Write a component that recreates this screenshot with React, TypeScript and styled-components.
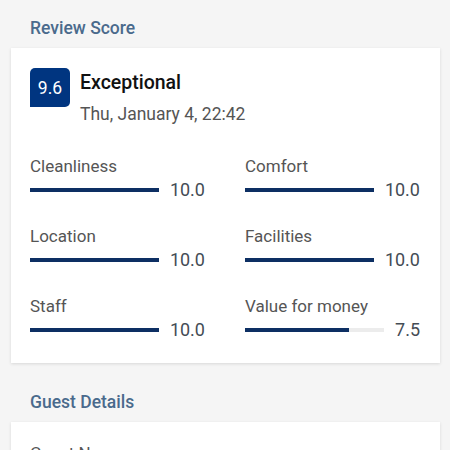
import styled, { createGlobalStyle } from "styled-components";

const GlobalStyle = createGlobalStyle`
  body {
    margin: 0;
    background: #f5f5f5;
    font-family: Roboto, "Noto Sans", sans-serif;
  }
`;

interface Rating {
  label: string;
  score: number;
}

const ratings: Rating[] = [
  { label: "Cleanliness", score: 10 },
  { label: "Comfort", score: 10 },
  { label: "Location", score: 10 },
  { label: "Facilities", score: 10 },
  { label: "Staff", score: 10 },
  { label: "Value for money", score: 7.5 },
];

export default function App() {
  return (
    <Page>
      <GlobalStyle />
      <SectionTitle>Review Score</SectionTitle>
      <Card>
        <ScoreHeader>
          <Badge>9.6</Badge>
          <div>
            <Verdict>Exceptional</Verdict>
            <DateText>Thu, January 4, 22:42</DateText>
          </div>
        </ScoreHeader>
        <RatingGrid>
          {ratings.map((r) => (
            <RatingItem key={r.label}>
              <RatingLabel>{r.label}</RatingLabel>
              <BarRow>
                <Track>
                  <Fill style={{ width: `${r.score * 10}%` }} />
                </Track>
                <Value>{r.score.toFixed(1)}</Value>
              </BarRow>
            </RatingItem>
          ))}
        </RatingGrid>
      </Card>
      <SectionTitle $spaced>Guest Details</SectionTitle>
      <Card>
        <RatingLabel>Guest Name</RatingLabel>
      </Card>
    </Page>
  );
}

const Page = styled.div`
  padding: 0 10px 0 11px;
  height: 450px;
  overflow: hidden;
  box-sizing: border-box;
`;

const SectionTitle = styled.div<{ $spaced?: boolean }>`
  padding: ${(p) => (p.$spaced ? "29px" : "18px")} 19px 10px;
  font-size: 17.5px;
  line-height: 20px;
  font-weight: 500;
  color: #4a6a8c;
`;

const Card = styled.div`
  background: #ffffff;
  padding: 20px 20px 21px 19px;
  box-shadow: 0 1px 3px rgba(0, 0, 0, 0.12);
`;

const ScoreHeader = styled.div`
  display: flex;
  column-gap: 10px;
  align-items: flex-start;
`;

const Badge = styled.div`
  width: 40px;
  height: 39px;
  background: #003580;
  border-radius: 5px 5px 5px 0;
  color: #ffffff;
  font-size: 17.5px;
  display: flex;
  align-items: center;
  justify-content: center;
`;

const Verdict = styled.div`
  font-size: 19.5px;
  line-height: 28px;
  margin-top: 1px;
  font-weight: 500;
  color: #111111;
`;

const DateText = styled.div`
  margin-top: 5px;
  font-size: 17.5px;
  line-height: 24px;
  color: #555555;
`;

const RatingGrid = styled.div`
  margin-top: 29px;
  display: grid;
  grid-template-columns: 1fr 1fr;
  column-gap: 40px;
  row-gap: 23px;
`;

const RatingItem = styled.div`
  display: flex;
  flex-direction: column;
`;

const RatingLabel = styled.div`
  font-size: 17px;
  line-height: 22px;
  color: #555555;
`;

const BarRow = styled.div`
  display: flex;
  align-items: center;
  column-gap: 11px;
  height: 24px;
  margin-top: 1px;
`;

const Track = styled.div`
  flex: 1;
  height: 4px;
  background: #ececec;
`;

const Fill = styled.div`
  height: 100%;
  background: #0d2f63;
`;

const Value = styled.div`
  font-size: 18px;
  line-height: 24px;
  color: #444c55;
`;
